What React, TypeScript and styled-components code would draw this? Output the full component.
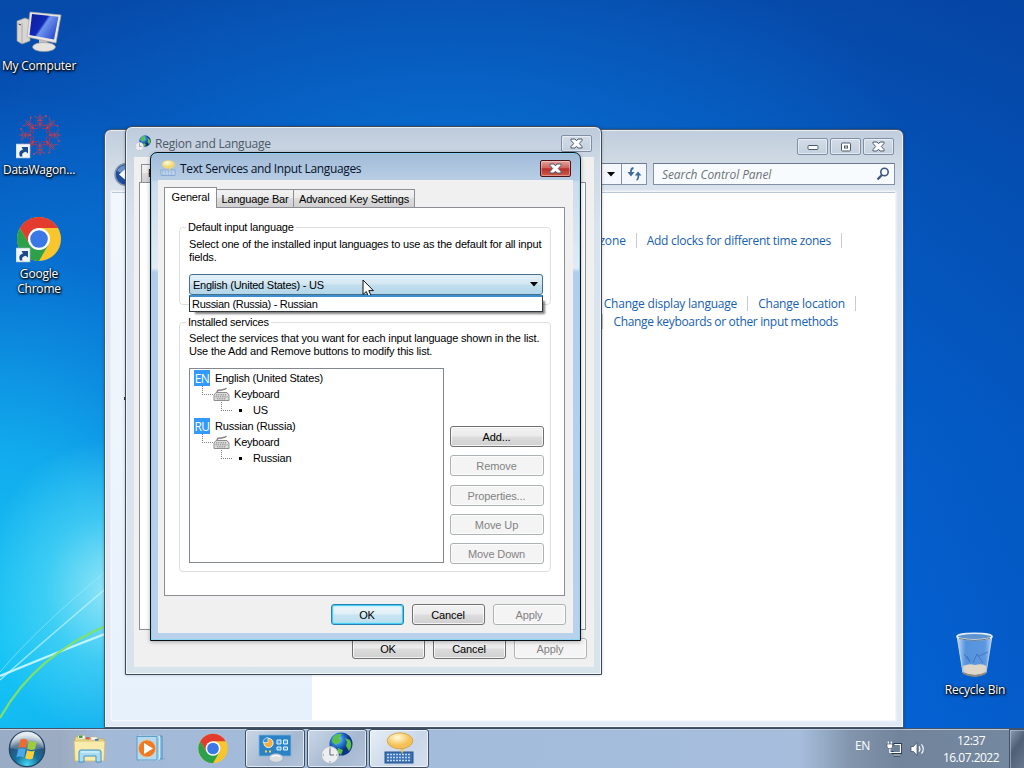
import React from "react";
import styled, { createGlobalStyle, css } from "styled-components";

const Global = createGlobalStyle`
  * { box-sizing: border-box; }
  html, body { margin: 0; width: 1024px; height: 768px; overflow: hidden; }
  body { font-family: "Open Sans", "Noto Sans", sans-serif; font-size: 12px; color: #000; }
`;

const Screen = styled.div`
  width: 1024px;
  height: 768px;
  display: flex;
  flex-direction: column;
  position: relative;
  overflow: hidden;
`;

const Desktop = styled.main`
  flex: 1;
  position: relative;
  background:
    radial-gradient(ellipse 130px 150px at 110px 590px, rgba(190, 248, 250, 0.75), rgba(110, 230, 248, 0.45) 50%, rgba(40, 200, 245, 0) 100%),
    radial-gradient(ellipse 400px 560px at 0 650px, rgba(20, 196, 245, 1), rgba(20, 184, 242, 0.85) 35%, rgba(10, 140, 225, 0.35) 72%, rgba(10, 130, 225, 0) 100%),
    radial-gradient(ellipse 480px 280px at 450px 200px, rgba(10, 124, 222, 0.7), rgba(8, 105, 208, 0) 100%),
    linear-gradient(90deg, rgba(0, 60, 160, 0) 75%, rgba(0, 50, 140, 0.22) 100%),
    linear-gradient(180deg, #064aaa 0%, #0558bf 30%, #0562d0 60%, #0568dc 100%);
`;

const Streaks = styled.svg`
  position: absolute;
  left: 0;
  bottom: 0;
`;

const Shortcut = styled.div<{ $x: number; $y: number; $gap?: number }>`
  position: absolute;
  left: ${(p) => p.$x}px;
  top: ${(p) => p.$y}px;
  width: 78px;
  display: flex;
  flex-direction: column;
  align-items: center;
  gap: ${(p) => p.$gap ?? 2}px;
`;

const ShortcutLabel = styled.span`
  color: #fff;
  font-size: 12px;
  line-height: 15px;
  text-align: center;
  white-space: pre;
  letter-spacing: -0.2px;
  text-shadow: 1px 1px 2px #000, 0 1px 3px #000, 0 0 2px rgba(0, 0, 0, 0.5);
`;

type Tone = "back" | "mid" | "front";

const tones = {
  back: css`
    border-color: #45566b;
    background: linear-gradient(180deg, #c0cddd 0, #cfd9e4 30px, #dbe4ee 62px, #e0e9f5 100%);
  `,
  mid: css`
    border-color: #3c4a5c;
    background: linear-gradient(180deg, #bccadb 0, #cdd8e4 32px, #d9e3ee 100px, #d8e4ec 100%);
  `,
  front: css`
    border-color: #0a1018;
    background: linear-gradient(180deg, rgba(157, 184, 214, 0.9) 0, rgba(182, 204, 228, 0.9) 27px, rgba(255, 255, 255, 0) 29px),
      linear-gradient(180deg, #c5d6e8 0, #e3ebf4 115px, #b3cde9 119px, #b9d1ea 100%);
  `,
};

const Frame = styled.section<{ $x: number; $y: number; $w: number; $h: number; $tone: Tone }>`
  position: absolute;
  left: ${(p) => p.$x}px;
  top: ${(p) => p.$y}px;
  width: ${(p) => p.$w}px;
  height: ${(p) => p.$h}px;
  display: flex;
  flex-direction: column;
  border: 1px solid;
  border-radius: 7px 7px 0 0;
  ${(p) => tones[p.$tone]}
  box-shadow: inset 0 0 0 1px
      ${(p) => (p.$tone === "front" ? "rgba(130,215,245,0.8)" : "rgba(255,255,255,0.65)")},
    ${(p) => (p.$tone === "front" ? "0 1px 4px rgba(0,0,0,0.3)" : "0 0 3px rgba(0,0,0,0.25)")};
`;

const TitleBar = styled.header<{ $h: number; $pad: string }>`
  height: ${(p) => p.$h}px;
  flex: none;
  display: flex;
  align-items: flex-start;
  padding: ${(p) => p.$pad};
`;

const TitleText = styled.h1<{ $muted?: boolean; $ls: number }>`
  margin: 1px 0 0 4px;
  flex: 1;
  font-size: 12px;
  font-weight: 400;
  line-height: 16px;
  letter-spacing: ${(p) => p.$ls}px;
  color: ${(p) => (p.$muted ? "#4c5967" : "#06122a")};
`;

const CaptionButton = styled.button<{ $w: number; $danger?: boolean }>`
  width: ${(p) => p.$w}px;
  height: 17px;
  padding: 0;
  display: flex;
  align-items: center;
  justify-content: center;
  border-radius: 2px;
  border: 1px solid ${(p) => (p.$danger ? "#4a1418" : "#7e8fa6")};
  background: ${(p) =>
    p.$danger
      ? "linear-gradient(180deg, #e3a29b 0, #d2655c 45%, #b8302a 52%, #cf5b48 100%)"
      : "linear-gradient(180deg, #d3dce8, #c4d0de)"};
  box-shadow: inset 0 0 0 1px rgba(255, 255, 255, ${(p) => (p.$danger ? 0.35 : 0.5)});
  & > svg { flex: none; }
`;

const CaptionGroup = styled.div`
  margin-left: auto;
  display: flex;
  gap: 2px;
`;

const NavRow = styled.div`
  display: flex;
  height: 22px;
  flex: none;
  padding: 0 8px 0 9px;
`;

const NavBox = styled.div<{ $w?: number }>`
  width: ${(p) => (p.$w ? p.$w + "px" : "auto")};
  flex: ${(p) => (p.$w ? "none" : "1")};
  display: flex;
  align-items: center;
  justify-content: center;
  border: 1px solid #8391a4;
  border-top-color: #6b7a8e;
  background: #f4f8fc;
  margin-left: -1px;
`;

const SearchBox = styled(NavBox)`
  margin-left: 6px;
  justify-content: space-between;
  padding: 0 4px 0 8px;
  font-style: italic;
  letter-spacing: -0.08px;
  color: #6d7478;
  background: #f8fbfd;
`;

const PanelBody = styled.div`
  flex: 1;
  margin: 7px 8px 7px 7px;
  display: flex;
  border-top: 1px solid #b8c6d6;
  background: #fff;
  box-shadow: 0 0 2px 1px rgba(255, 255, 255, 0.9);
`;

const PanelSide = styled.aside`
  width: 200px;
  background: linear-gradient(180deg, #f2f7fd, #e6f1fc);
`;

const PanelMain = styled.div`
  flex: 1;
  padding-top: 38px;
`;

const LinkRow = styled.div<{ $right: number; $top?: number }>`
  display: flex;
  justify-content: flex-end;
  align-items: center;
  height: 18px;
  margin-top: ${(p) => p.$top ?? 0}px;
  padding-right: ${(p) => p.$right}px;
  gap: 10px;
`;

const PanelLink = styled.a<{ $ls: number }>`
  color: #1660b0;
  white-space: nowrap;
  letter-spacing: ${(p) => p.$ls}px;
`;

const LinkSep = styled.i`
  width: 1px;
  height: 15px;
  background: #c9ccd0;
`;

const Client = styled.div<{ $m: string }>`
  flex: 1;
  min-height: 0;
  margin: ${(p) => p.$m};
  display: flex;
  flex-direction: column;
  background: #f0f0f0;
  font-family: "Liberation Sans", Arial, sans-serif;
  font-size: 11px;
  letter-spacing: -0.2px;
`;

const TabStrip = styled.div<{ $m: string }>`
  display: flex;
  align-items: flex-end;
  height: 20px;
  flex: none;
  margin: ${(p) => p.$m};
`;

const Tab = styled.button<{ $w: number; $active?: boolean; $start?: boolean }>`
  width: ${(p) => p.$w}px;
  height: ${(p) => (p.$active ? 21 : 18)}px;
  margin-bottom: ${(p) => (p.$active ? -1 : 0)}px;
  position: relative;
  padding: 0 0 2px ${(p) => (p.$start ? 6 : 0)}px;
  border: 1px solid #8c8e94;
  border-bottom: 0;
  font: 11px "Liberation Sans", Arial, sans-serif;
  letter-spacing: -0.18px;
  text-align: ${(p) => (p.$start ? "left" : "center")};
  white-space: nowrap;
  background: ${(p) => (p.$active ? "#fff" : "linear-gradient(180deg, #f2f2f2 0, #ebebeb 45%, #dcdcdc 50%, #d0d0d0 100%)")};
  & + & { border-left-width: ${(p) => (p.$active ? 1 : 0)}px; padding-bottom: 0; }
`;

const TabPage = styled.div<{ $m: string; $pad?: string }>`
  flex: 1;
  display: flex;
  flex-direction: column;
  border: 1px solid #8c8e94;
  background: #fff;
  margin: ${(p) => p.$m};
  padding: ${(p) => p.$pad ?? "0"};
`;

const Group = styled.fieldset<{ $h: number; $top: number }>`
  height: ${(p) => p.$h}px;
  margin: ${(p) => p.$top}px 0 0;
  min-width: 0;
  padding: 0 7px 0 9px;
  border: 1px solid #dcdfe2;
  border-radius: 4px;
`;

const Legend = styled.legend`
  margin-left: -3px;
  padding: 0 2px;
  line-height: 13px;
  height: 13px;
`;

const Copy = styled.p<{ $top: number }>`
  margin: ${(p) => p.$top}px -6px 0 0;
  line-height: 13px;
  white-space: pre;
  letter-spacing: -0.17px;
`;

const Combo = styled.div`
  position: relative;
  width: 354px;
  height: 21px;
  margin-top: 10px;
  display: flex;
  align-items: center;
  justify-content: space-between;
  padding: 0 4px 0 3px;
  border: 1px solid #44708c;
  border-radius: 3px;
  background: linear-gradient(180deg, #e4f0f8 0, #d3e7f3 48%, #c2deed 52%, #b2d6e9 100%);
  letter-spacing: -0.24px;
`;

const DropList = styled.div`
  position: absolute;
  left: -1px;
  top: 20px;
  width: 354px;
  height: 17px;
  z-index: 2;
  border: 1px solid #32373c;
  border-top: 2px solid #3c8fd0;
  background: #fff;
  padding-left: 2px;
  line-height: 15px;
  letter-spacing: -0.3px;
  box-shadow: 4px 4px 2px -2px rgba(0, 0, 0, 0.5);
`;

const ServiceRow = styled.div`
  display: flex;
  align-items: flex-end;
  justify-content: space-between;
  margin-top: 10px;
`;

const Tree = styled.div`
  width: 255px;
  height: 195px;
  border: 1px solid #828790;
  padding: 1px 0 0 4px;
`;

const TreeRow = styled.div<{ $indent: number }>`
  display: flex;
  align-items: center;
  height: 16px;
  padding-left: ${(p) => p.$indent}px;
`;

const LangBadge = styled.b`
  width: 16px;
  height: 16px;
  margin-right: 5px;
  background: #3399ff;
  color: #fff;
  font: 12px/17px "Open Sans", sans-serif;
  letter-spacing: -0.5px;
  text-align: center;
`;

const Elbow = styled.i<{ $w: number }>`
  width: ${(p) => p.$w}px;
  height: 9px;
  align-self: flex-start;
  border-left: 1px dotted #808080;
  border-bottom: 1px dotted #808080;
`;

const Bullet = styled.i`
  width: 3px;
  height: 3px;
  margin: 0 11px 0 7px;
  background: #000;
`;

const ButtonColumn = styled.div`
  display: flex;
  flex-direction: column;
  gap: 8px;
  margin-bottom: -1px;
  margin-right: -1px;
`;

const PushButton = styled.button<{ $w: number; $look?: "default" | "disabled"; $gap?: number }>`
  width: ${(p) => p.$w}px;
  height: 21px;
  margin-top: ${(p) => p.$gap ?? 0}px;
  padding: 0 1px 0 0;
  font: 11px "Liberation Sans", Arial, sans-serif;
  letter-spacing: -0.1px;
  border-radius: 3px;
  color: #000;
  border: 1px solid #707070;
  background: linear-gradient(180deg, #f2f2f2 0, #ebebeb 48%, #dddddd 52%, #cfcfcf 100%);
  box-shadow: inset 0 0 0 1px rgba(255, 255, 255, 0.75);
  ${(p) =>
    p.$look === "default" &&
    css`
      border-color: #2c7fae;
      background: linear-gradient(180deg, #eef6fa 0, #e0eff6 48%, #c8e4f2 52%, #bce0f2 100%);
      box-shadow: inset 0 0 0 1px #46cff5, inset 0 0 2px 1px #7fdcf6;
    `}
  ${(p) =>
    p.$look === "disabled" &&
    css`
      color: #838383;
      border-color: #adb2b5;
      background: #f4f4f4;
    `}
`;

const ButtonRow = styled.footer<{ $pad: string }>`
  display: flex;
  flex: none;
  justify-content: flex-end;
  gap: 8px;
  padding: ${(p) => p.$pad};
`;

const Pointer = styled.svg`
  position: absolute;
  left: 362px;
  top: 279px;
`;

const EdgeMark = styled.i`
  position: absolute;
  left: 124px;
  top: 397px;
  width: 2px;
  height: 3px;
  background: #333;
`;

const Taskbar = styled.nav`
  height: 40px;
  flex: none;
  display: flex;
  align-items: stretch;
  border-top: 1px solid #43536a;
  box-shadow: inset 0 1px 0 rgba(215, 228, 242, 0.7);
  background: linear-gradient(90deg, #99acc6 0, #9cabc0 60px, #a2b9d7 100px, #a4bcdc 430px, #a6bedc 800px, #8295ad 850px, #71849c 900px, #74889f 1024px);
`;

const Launchers = styled.div`
  display: flex;
  align-items: center;
  width: 245px;
  padding-left: 8px;
`;

const Launcher = styled.button<{ $w: number; $left: number }>`
  width: ${(p) => p.$w}px;
  height: 38px;
  margin-left: ${(p) => p.$left}px;
  padding: 0;
  border: 0;
  background: none;
  display: flex;
  align-items: center;
  justify-content: center;
`;

const TaskButton = styled.button<{ $active?: boolean }>`
  width: 60px;
  margin: 0 1px 0 0;
  padding: 0 0 2px;
  display: flex;
  align-items: center;
  justify-content: center;
  border: 1px solid #3f4f66;
  border-radius: 3px;
  box-shadow: inset 0 0 0 1px rgba(255, 255, 255, 0.65);
  background: ${(p) =>
    p.$active
      ? "linear-gradient(135deg, #e7eef6, #c9d7e8 60%, #d5e0ee)"
      : "linear-gradient(135deg, #c9d6e6, #a5b8d0 60%, #b3c5dc)"};
  & + & { margin-left: 1px; }
`;

const Tray = styled.div`
  margin-left: auto;
  display: flex;
  align-items: center;
  color: #fff;
`;

const LangCode = styled.span`
  margin: -6px 15px 0 0;
  font-size: 12px;
  letter-spacing: -0.4px;
`;

const Clock = styled.time`
  width: 76px;
  margin: 1px 0 0 6px;
  display: flex;
  flex-direction: column;
  align-items: center;
  line-height: 17px;
  letter-spacing: -0.5px;
`;

const ShowDesktop = styled.button`
  align-self: stretch;
  width: 15px;
  padding: 0;
  border: 1px solid #42526a;
  border-right: 0;
  border-bottom: 0;
  box-shadow: inset 1px 1px 0 rgba(200, 215, 230, 0.5);
  background: linear-gradient(125deg, #8b9cb0, #4f6076 45%, #66788e);
`;

const CloseGlyph = () => (
  <svg width="13" height="11" viewBox="0 0 13 11">
    <path d="M1 1 H5 L6.5 2.8 L8 1 H12 V2.5 L9.3 5.5 L12 8.5 V10 H8 L6.5 8.2 L5 10 H1 V8.5 L3.7 5.5 L1 2.5 Z" fill="#fff" stroke="#4b5a6c" strokeWidth="1" />
    <path d="M4 3.4 L9 7.6 M9 3.4 L4 7.6" stroke="#fff" strokeWidth="1.6" />
  </svg>
);

const ComputerIcon = () => (
  <svg width="46" height="44" viewBox="0 0 46 44">
    <defs>
      <linearGradient id="scr" x1="0" y1="0" x2="1" y2="0.6">
        <stop offset="0" stopColor="#0a1f9c" />
        <stop offset="0.5" stopColor="#1128b8" />
        <stop offset="0.58" stopColor="#6f94ec" />
        <stop offset="1" stopColor="#2f52d2" />
      </linearGradient>
    </defs>
    <path d="M1 11 L9 8 L14 10 L14 31 L6 34 L1 31 Z" fill="#d7d6d2" stroke="#8f8f92" strokeWidth="0.7" />
    <path d="M6 13 V33" stroke="#aaa" /><path d="M2.5 14 L5 15" stroke="#444" />
    <path d="M23 28 L31 30 L32 37 L23 36 Z" fill="#c4c3c0" />
    <ellipse cx="28" cy="37" rx="11.5" ry="4.5" fill="#e6e4df" stroke="#9c9b98" strokeWidth="0.7" />
    <path d="M14 2 L45 5 L40 33 L11 27 Z" fill="#e9e7e2" stroke="#a9a7a3" strokeWidth="0.7" />
    <path d="M16 4 L42.5 6.8 L38 29.5 L13.5 25 Z" fill="url(#scr)" />
  </svg>
);

const ShortcutArrow = () => (
  <g transform="translate(0 31)">
    <rect width="14" height="14" fill="#f1f6fb" stroke="#9fb4c9" strokeWidth="0.6" />
    <path d="M4 12.5 C2.5 9 3.5 6.5 7 5.5 L5.5 3 H12 V9.5 L9.7 7.7 C6.5 8.5 5.5 10 6.5 12.5 Z" fill="#1b4b8f" />
  </g>
);

const WagonIcon = () => (
  <svg width="46" height="47" viewBox="0 0 46 47">
    <g transform="translate(24 22)" fill="none" stroke="#b3344f" strokeWidth="0.8" opacity="0.9">
      {[0, 45, 90, 135, 180, 225, 270, 315].map((a) => (
        <g key={a} transform={`rotate(${a})`}>
          <path d="M-5 -8 L0 -14 L5 -8 M-3 -13 L3 -6 M3 -13 L-3 -6" />
          <path d="M-6 -19 L0 -15 L6 -19 M0 -21 V-9 M-2.5 -18 H2.5 M-3 -14.5 H3" stroke="#c6404f" />
          <circle cx="6" cy="-19" r="0.9" fill="#d34655" stroke="none" />
          <circle cx="0" cy="-10.5" r="1" fill="#d34655" stroke="none" />
        </g>
      ))}
    </g>
    <ShortcutArrow />
  </svg>
);

const ChromeParts = () => (
  <g>
    <circle r="22" fill="#f8c62c" />
    <path d="M-19.05 -11 A22 22 0 0 1 19.05 -11 L0 -11 L-9.5 5.5 Z" fill="#e33b2e" />
    <path d="M-19.05 -11 A22 22 0 0 0 0 22 L9.5 5.5 L-9.5 5.5 Z" fill="#2da04a" />
    <circle r="11" fill="#fff" />
    <circle r="8.8" fill="#3b78e7" />
  </g>
);

const ChromeDesktopIcon = () => (
  <svg width="46" height="47" viewBox="0 0 46 47">
    <g transform="translate(23 22)"><ChromeParts /></g>
    <ShortcutArrow />
  </svg>
);

const BinIcon = () => (
  <svg width="40" height="46" viewBox="0 0 40 46">
    <defs>
      <linearGradient id="bin" x1="0" x2="1">
        <stop offset="0" stopColor="#e5eefa" stopOpacity="0.9" />
        <stop offset="0.25" stopColor="#7fb0e6" stopOpacity="0.65" />
        <stop offset="0.8" stopColor="#79abe6" stopOpacity="0.75" />
        <stop offset="1" stopColor="#dbe9f8" stopOpacity="0.85" />
      </linearGradient>
    </defs>
    <path d="M2 4 L8 41 Q20 47 31 41 L37 4 Z" fill="url(#bin)" stroke="#b9d1ea" strokeWidth="1" />
    <path d="M8 34 Q14 31 20 33 Q27 31 31.5 34 L30.5 41 Q20 45 8.5 41 Z" fill="#ddd6c9" />
    <path d="M8 40 Q20 46 31 40 L31 42 Q20 48 8 42 Z" fill="#8a867f" />
    <path d="M9 22 L15 30 L12 24 M18 31 L22 22 L28 31 M24 24 L33 20" stroke="#3c6fb8" strokeWidth="0.8" fill="none" />
    <ellipse cx="19.5" cy="4.5" rx="17.5" ry="3.2" fill="#5d93cf" stroke="#e2edf7" strokeWidth="1.6" />
    <path d="M4 6.5 Q19 10 35 6.5" stroke="#42505e" strokeWidth="0.8" fill="none" />
  </svg>
);

const GlobeClock = ({ size }: { size: number }) => (
  <svg width={size} height={size} viewBox="0 0 32 32">
    <defs>
      <radialGradient id={`glb${size}`} cx="0.35" cy="0.3">
        <stop offset="0" stopColor="#a6e6ff" />
        <stop offset="0.5" stopColor="#2c82dc" />
        <stop offset="1" stopColor="#0b3488" />
      </radialGradient>
    </defs>
    <circle cx="20" cy="12" r="11.5" fill={`url(#glb${size})`} />
    <path d="M12 5 Q16 1 21 2 L18 6 L20 9 L15 13 L11 10 Z M24 6 L29 8 Q32 14 28 19 L25 14 L26 10 Z M17 16 L22 18 L20 23 L16 20 Z" fill="#5cc043" />
    <circle cx="9" cy="23" r="8.5" fill="#eceef1" stroke="#b4bcc6" />
    <path d="M9 17 V23 H13" stroke="#666" fill="none" />
    <path d="M9 15.5 V17 M9 29 V30.5 M1.7 23 H3 M15 23 H16.4" stroke="#888" />
  </svg>
);

const BubbleKeyboard = ({ size, light }: { size: number; light?: boolean }) => (
  <svg width={size} height={size} viewBox="0 0 32 32">
    <defs>
      <radialGradient id={`bub${size}`} cx="0.4" cy="0.3">
        <stop offset="0" stopColor="#fffbdc" />
        <stop offset="1" stopColor={light ? "#efd873" : "#f5c055"} />
      </radialGradient>
    </defs>
    <rect x="2" y="20" width="28" height="11" fill={light ? "#cfe0f3" : "#3a70b2"} stroke={light ? "#4f83c0" : "#28558f"} />
    {[22.5, 25.5, 28.5].map((y) => (
      <path key={y} d={`M4 ${y} H28`} stroke={light ? "#7ba4d2" : "#bcd6f0"} strokeWidth="1.6" strokeDasharray="2 1" />
    ))}
    <path d="M17 15 H22 L19 22 Z" fill="#f0c565" />
    <ellipse cx="17" cy="8.8" rx="12.8" ry="8" fill={`url(#bub${size})`} stroke={light ? "#e2cf8a" : "#cf9c45"} strokeWidth="0.8" />
  </svg>
);

const StartOrb = () => (
  <svg width="38" height="38" viewBox="0 0 38 38">
    <defs>
      <radialGradient id="orb" cx="0.5" cy="0.95" r="0.85">
        <stop offset="0" stopColor="#48d8f2" />
        <stop offset="0.4" stopColor="#14719f" />
        <stop offset="0.75" stopColor="#2a5278" />
        <stop offset="1" stopColor="#b6c8d8" />
      </radialGradient>
      <linearGradient id="orbShine" x1="0" y1="0" x2="0" y2="1">
        <stop offset="0" stopColor="#fff" stopOpacity="0.75" />
        <stop offset="1" stopColor="#fff" stopOpacity="0.12" />
      </linearGradient>
    </defs>
    <circle cx="19" cy="19" r="17.7" fill="url(#orb)" stroke="#26435f" strokeWidth="1.2" />
    <path d="M2.5 18 A16.5 16.5 0 0 1 35.5 18 Q19 23 2.5 18 Z" fill="url(#orbShine)" />
    <path d="M12.5 9.5 Q15.5 7.8 19.5 10 L18 18 Q14 16 10.5 18 Z" fill="#ee6a30" />
    <path d="M20.8 10.8 Q25 13 29 11 L27 19 Q23 21 19.3 18.8 Z" fill="#9ccb3c" />
    <path d="M10.2 19.4 Q13.8 17.5 17.7 19.5 L16 27.5 Q12 25.5 8.3 27.5 Z" fill="#4aa8e8" />
    <path d="M19 20.3 Q23 22.3 26.7 20.5 L24.8 28.4 Q21 30.3 17.2 28.3 Z" fill="#f9cf3c" />
  </svg>
);

const ExplorerIcon = () => (
  <svg width="33" height="30" viewBox="0 0 33 30">
    <path d="M2 3 H9 L10 5 H31 V26 H2 Z" fill="#eedc91" stroke="#c6a651" strokeWidth="0.8" />
    <path d="M5 1.5 H12 V5 H5 Z M18 3 H24 V6 H18 Z" fill="#fffdf4" stroke="#c3b078" strokeWidth="0.5" />
    <rect x="6" y="1.5" width="3.5" height="2.5" fill="#3ba14a" />
    <rect x="13" y="3.2" width="3.5" height="2.2" fill="#d9534a" />
    <rect x="22" y="5" width="3.5" height="2" fill="#3978c8" />
    <path d="M1 7 H32 L31 27 H2 Z" fill="#f8ebac" stroke="#d3b868" strokeWidth="0.8" />
    <path d="M6 28 V18 Q6 16 8 16 H26 Q28 16 28 18 V28 H23 V22 H11 V28 Z" fill="#a9dcf1" stroke="#3c94c8" strokeWidth="1" />
    <path d="M8 18 H26" stroke="#e8f8ff" />
  </svg>
);

const PlayerIcon = () => (
  <svg width="30" height="27" viewBox="0 0 30 27">
    <path d="M5 1 H26 V24 H5 Z" fill="#8fc4e4" stroke="#3f84b4" strokeWidth="0.8" />
    <path d="M3 1 H23.5 V25 H3 Z" fill="#a4d2ec" stroke="#e3f2fa" strokeWidth="0.8" />
    <path d="M1 1.5 H21 V25 H1 Z" fill="#b4daf0" stroke="#4a8fbd" strokeWidth="0.8" />
    <path d="M22 25.5 L29 23.5" stroke="#7fa9cc" />
    <circle cx="11" cy="13.5" r="8.6" fill="#ee7a23" stroke="#f8c394" strokeWidth="0.7" />
    <path d="M8 8 L17 13.5 L8 19 Z" fill="#fff" />
  </svg>
);

const ControlPanelIcon = () => (
  <svg width="34" height="30" viewBox="0 0 34 30">
    <rect x="1" y="2" width="32" height="21" fill="#2b83c5" stroke="#7db4de" strokeWidth="0.8" />
    <circle cx="10.5" cy="10" r="4.6" fill="#f3ad3b" stroke="#eaf4fb" />
    <path d="M10 9.5 V4.5 A5 5 0 0 0 5 9.5 Z" fill="#3a8fd2" stroke="#fff" strokeWidth="0.6" />
    <path d="M19 7 H23 V11 H19 Z M25.5 7 H29.5 V11 H25.5 Z M19 14 H23 V17 H19 Z M25.5 14 H29.5 V17 H25.5 Z" fill="#4aa0dc" stroke="#e4f2fb" />
    <path d="M7 18.5 H9 M11 18.5 H13" stroke="#f5d15e" strokeWidth="2" />
    <ellipse cx="18" cy="25" rx="7" ry="4.2" fill="#dcdfe2" stroke="#a7afb8" strokeWidth="0.7" />
    <path d="M14 23.5 Q18 21.5 22 23.5" stroke="#fff" fill="none" />
  </svg>
);

const KeyboardSvg = styled.svg`
  flex: none;
  margin-right: 4px;
`;

const KeyboardGlyph = () => (
  <KeyboardSvg width="17" height="15" viewBox="0 0 17 15">
    <path d="M4 5 C5 1.5 7 4 9 2.8 C11 2 11 3.5 13.5 1" stroke="#848484" strokeWidth="1.5" fill="none" />
    <path d="M3 5.5 H14 L16 8 V13.5 H1 V8 Z" fill="#dedede" stroke="#8d8d8d" />
    <path d="M3 7.8 H14 M2.5 9.8 H14.5 M4 11.8 H13" stroke="#808080" strokeDasharray="1.4 0.8" />
  </KeyboardSvg>
);

const TrayIcons = () => (
  <svg width="42" height="20" viewBox="0 0 42 20">
    <g fill="none" stroke="#26374a" strokeWidth="3">
      <path d="M8.5 5.5 H15.5 V13.5 H6.5 M8.5 16 H15 M2 6.5 H8" />
    </g>
    <path d="M8.5 5.5 H15.5 V13.5 H8.5 Z" fill="#6d8095" />
    <g fill="none" stroke="#fff" strokeWidth="1.2">
      <path d="M9.5 5.5 H15.5 V13.5 H6.5 M8.5 16 H15" />
      <path d="M3.3 2.5 V5 M6.3 2.5 V5 M4.8 9 V13.5 H7" />
    </g>
    <path d="M2 5 H7.6 V8 L6 9.5 H3.6 L2 8 Z" fill="#fff" stroke="#26374a" strokeWidth="0.5" />
    <path d="M26 7.5 H28.5 L32 3.5 V16.5 L28.5 12.5 H26 Z" fill="#fff" stroke="#33455a" strokeWidth="0.7" />
    <path d="M34 7.3 Q36 10 34 12.7 M36.5 5.3 Q40 10 36.5 14.7" stroke="#fff" strokeWidth="1.1" fill="none" />
  </svg>
);

const Arrow = () => (
  <svg width="8" height="5" viewBox="0 0 8 5"><path d="M0 0 H8 L4 4.6 Z" fill="#000" /></svg>
);

const Branch = ({ code, name, layout }: { code: string; name: string; layout: string }) => (
  <>
    <TreeRow $indent={0}><LangBadge>{code}</LangBadge>{name}</TreeRow>
    <TreeRow $indent={8}><Elbow $w={11} /><KeyboardGlyph />Keyboard</TreeRow>
    <TreeRow $indent={27}><Elbow $w={11} /><Bullet />{layout}</TreeRow>
  </>
);

const ControlPanelWindow = () => (
  <Frame $tone="back" $x={104} $y={129} $w={800} $h={599}>
    <TitleBar $h={33} $pad="8px 9px 0 8px">
      <CaptionGroup>
        <CaptionButton $w={31}><svg width="12" height="9"><rect x="1" y="3.5" width="10" height="4" rx="1" fill="#fff" stroke="#4b5a6c" /></svg></CaptionButton>
        <CaptionButton $w={31}>
          <svg width="12" height="10"><rect x="1.5" y="1" width="9" height="8" rx="1" fill="#fff" stroke="#4b5a6c" /><rect x="4.5" y="4" width="3" height="2" fill="#fff" stroke="#4b5a6c" /></svg>
        </CaptionButton>
        <CaptionButton $w={31}><CloseGlyph /></CaptionButton>
      </CaptionGroup>
    </TitleBar>
    <NavRow>
      <svg width="28" height="28" viewBox="0 0 28 28">
        <circle cx="12" cy="11.5" r="11" fill="#1d4f9e" stroke="#8796a8" strokeWidth="1.5" />
        <path d="M3 8 A10 10 0 0 1 21 8 Q12 13 3 8 Z" fill="#8fb0d8" opacity="0.7" />
        <path d="M5 11.5 L12 5.5 V17.5 Z" fill="#fff" />
      </svg>
      <NavBox />
      <NavBox $w={22}><Arrow /></NavBox>
      <NavBox $w={26}>
        <svg width="15" height="14" viewBox="0 0 15 14">
          <path d="M6.5 1 Q3.5 1.5 4 6 M9.5 13 Q12 12 11.2 7" fill="none" stroke="#3c6c9c" strokeWidth="1.8" />
          <path d="M0.5 5 H7.5 L4 9.5 Z M7.8 8.5 L11 4.5 L14.5 8.5 Z" fill="#3c6c9c" />
        </svg>
      </NavBox>
      <SearchBox $w={242}>
        <span>Search Control Panel</span>
        <svg width="14" height="14" viewBox="0 0 14 14"><circle cx="8.5" cy="5" r="3.7" fill="none" stroke="#3d587c" strokeWidth="1.6" /><path d="M5.8 8 L1.5 12.5" stroke="#3d587c" strokeWidth="2.3" /></svg>
      </SearchBox>
    </NavRow>
    <PanelBody>
      <PanelSide />
      <PanelMain>
        <LinkRow $right={53}>
          <PanelLink $ls={-0.15}>Change the time zone</PanelLink><LinkSep />
          <PanelLink $ls={-0.28}>Add clocks for different time zones</PanelLink><LinkSep />
        </LinkRow>
        <LinkRow $right={39} $top={45}>
          <PanelLink $ls={-0.22}>Change display language</PanelLink><LinkSep />
          <PanelLink $ls={-0.2}>Change location</PanelLink><LinkSep />
        </LinkRow>
        <LinkRow $right={57}>
          <LinkSep /><PanelLink $ls={-0.34}>Change keyboards or other input methods</PanelLink>
        </LinkRow>
      </PanelMain>
    </PanelBody>
  </Frame>
);

const RegionWindow = () => (
  <Frame $tone="mid" $x={125} $y={126} $w={477} $h={549}>
    <TitleBar $h={30} $pad="8px 9px 0 9px">
      <GlobeClock size={16} />
      <TitleText $muted $ls={-0.22}>Region and Language</TitleText>
      <CaptionButton $w={31}><CloseGlyph /></CaptionButton>
    </TitleBar>
    <Client $m="0 7px 7px 8px">
      <TabStrip $m="5px 0 0 7px"><Tab $w={60} $start>Formats</Tab></TabStrip>
      <TabPage $m="0 8px 0 5px" />
      <ButtonRow $pad="8px 7px 8px">
        <PushButton $w={73}>OK</PushButton>
        <PushButton $w={73}>Cancel</PushButton>
        <PushButton $w={73} $look="disabled">Apply</PushButton>
      </ButtonRow>
    </Client>
  </Frame>
);

const TextServicesWindow = () => (
  <Frame $tone="front" $x={150} $y={152} $w={431} $h={489}>
    <TitleBar $h={27} $pad="7px 9px 0 9px">
      <BubbleKeyboard size={16} light />
      <TitleText $ls={-0.35}>Text Services and Input Languages</TitleText>
      <CaptionButton $w={31} $danger><CloseGlyph /></CaptionButton>
    </TitleBar>
    <Client $m="0 7px 7px 7px">
      <TabStrip $m="7px 6px 0">
        <Tab $w={53} $active>General</Tab>
        <Tab $w={77}>Language Bar</Tab>
        <Tab $w={121}>Advanced Key Settings</Tab>
      </TabStrip>
      <TabPage $m="0 8px 0 6px" $pad="0 13px 0 14px">
        <Group $h={84} $top={13}>
          <Legend>Default input language</Legend>
          <Copy $top={4}>{"Select one of the installed input languages to use as the default for all input\nfields."}</Copy>
          <Combo>
            <span>English (United States) - US</span>
            <Arrow />
            <DropList>Russian (Russia) - Russian</DropList>
          </Combo>
        </Group>
        <Group $h={256} $top={11}>
          <Legend>Installed services</Legend>
          <Copy $top={3}>{"Select the services that you want for each input language shown in the list.\nUse the Add and Remove buttons to modify this list."}</Copy>
          <ServiceRow>
            <Tree>
              <Branch code="EN" name="English (United States)" layout="US" />
              <Branch code="RU" name="Russian (Russia)" layout="Russian" />
            </Tree>
            <ButtonColumn>
              <PushButton $w={94}>Add...</PushButton>
              <PushButton $w={94} $look="disabled">Remove</PushButton>
              <PushButton $w={94} $look="disabled" $gap={1}>Properties...</PushButton>
              <PushButton $w={94} $look="disabled">Move Up</PushButton>
              <PushButton $w={94} $look="disabled">Move Down</PushButton>
            </ButtonColumn>
          </ServiceRow>
        </Group>
      </TabPage>
      <ButtonRow $pad="8px 7px 8px">
        <PushButton $w={73} $look="default">OK</PushButton>
        <PushButton $w={73}>Cancel</PushButton>
        <PushButton $w={73} $look="disabled">Apply</PushButton>
      </ButtonRow>
    </Client>
  </Frame>
);

export default function App() {
  return (
    <Screen>
      <Global />
      <Desktop>
        <Streaks width="110" height="230" viewBox="0 498 110 230" fill="none">
          <path d="M0 680 Q45 640 110 585" stroke="#bff6fc" strokeWidth="1.6" opacity="0.7" />
          <path d="M0 676 Q50 655 110 632" stroke="#d6fbfd" strokeWidth="2.4" opacity="0.85" />
          <path d="M0 672 Q40 625 110 568" stroke="#9deefa" strokeWidth="1" opacity="0.6" />
          <path d="M0 718 Q35 655 110 624" stroke="#7fe06c" strokeWidth="2.2" />
        </Streaks>
        <Shortcut $x={0} $y={10} $gap={4}><ComputerIcon /><ShortcutLabel>My Computer</ShortcutLabel></Shortcut>
        <Shortcut $x={0} $y={113}><WagonIcon /><ShortcutLabel>DataWagon...</ShortcutLabel></Shortcut>
        <Shortcut $x={0} $y={217}><ChromeDesktopIcon /><ShortcutLabel>{"Google\nChrome"}</ShortcutLabel></Shortcut>
        <Shortcut $x={936} $y={632} $gap={4}><BinIcon /><ShortcutLabel>Recycle Bin</ShortcutLabel></Shortcut>
        <ControlPanelWindow />
        <EdgeMark />
        <RegionWindow />
        <TextServicesWindow />
        <Pointer width="13" height="20" viewBox="0 0 13 20">
          <path d="M1 1 V15.5 L4.3 12.5 L6.8 18.3 L9.3 17.2 L6.8 11.6 H11.4 Z" fill="#fff" stroke="#111" strokeWidth="1" />
        </Pointer>
      </Desktop>
      <Taskbar>
        <Launchers>
          <Launcher $w={38} $left={0}><StartOrb /></Launcher>
          <Launcher $w={34} $left={26}><ExplorerIcon /></Launcher>
          <Launcher $w={30} $left={30}><PlayerIcon /></Launcher>
          <Launcher $w={30} $left={32}><svg width="31" height="31" viewBox="-22.5 -22.5 45 45"><ChromeParts /></svg></Launcher>
        </Launchers>
        <TaskButton><ControlPanelIcon /></TaskButton>
        <TaskButton><GlobeClock size={32} /></TaskButton>
        <TaskButton $active><BubbleKeyboard size={32} /></TaskButton>
        <Tray>
          <LangCode>EN</LangCode>
          <TrayIcons />
          <Clock><span>12:37</span><span>16.07.2022</span></Clock>
          <ShowDesktop />
        </Tray>
      </Taskbar>
    </Screen>
  );
}
